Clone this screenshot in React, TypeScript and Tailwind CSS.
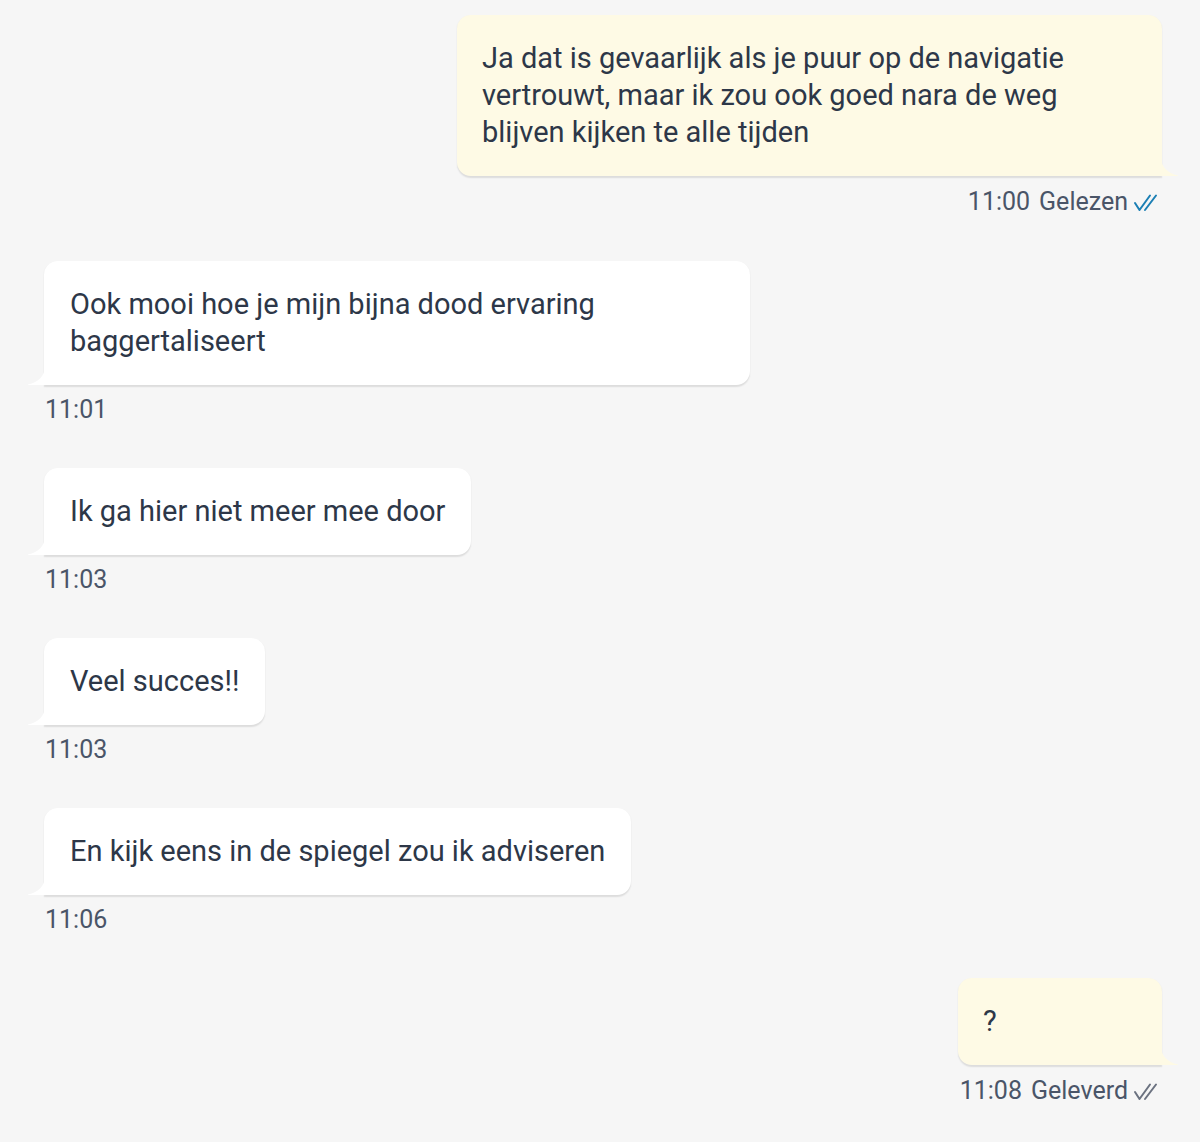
type Msg = {
  side: "in" | "out";
  text: string;
  time: string;
  status?: "Gelezen" | "Geleverd";
};

const messages: Msg[] = [
  {
    side: "out",
    text: "Ja dat is gevaarlijk als je puur op de navigatie vertrouwt, maar ik zou ook goed nara de weg blijven kijken te alle tijden",
    time: "11:00",
    status: "Gelezen",
  },
  { side: "in", text: "Ook mooi hoe je mijn bijna dood ervaring baggertaliseert", time: "11:01" },
  { side: "in", text: "Ik ga hier niet meer mee door", time: "11:03" },
  { side: "in", text: "Veel succes!!", time: "11:03" },
  { side: "in", text: "En kijk eens in de spiegel zou ik adviseren", time: "11:06" },
  { side: "out", text: "?", time: "11:08", status: "Geleverd" },
];

function Ticks({ read }: { read: boolean }) {
  return (
    <svg width="28" height="20" viewBox="0 0 28 20" className="ml-[4px] mt-[2px]">
      <path
        d="M3 10 L7.5 17 L18 2.5 M13 17 L24 2.5"
        fill="none"
        stroke={read ? "#1b7fb4" : "#6b7280"}
        strokeWidth="2"
        strokeLinecap="round"
        strokeLinejoin="round"
      />
    </svg>
  );
}

function Tail({ side, color }: { side: "in" | "out"; color: string }) {
  if (side === "out") {
    return (
      <svg width="17" height="17" viewBox="0 0 17 17" className="absolute bottom-0 right-[-16px]">
        <path d="M0 0 C1 8 6 14 17 16.5 L17 17 L0 17 Z" fill={color} />
      </svg>
    );
  }
  return (
    <svg width="17" height="17" viewBox="0 0 17 17" className="absolute bottom-0 left-[-16px]">
      <path d="M17 0 C16 8 11 14 0 16.5 L0 17 L17 17 Z" fill={color} />
    </svg>
  );
}

function Bubble({ m }: { m: Msg }) {
  const out = m.side === "out";
  const color = out ? "#fefae5" : "#ffffff";
  return (
    <div className={out ? "flex flex-col items-end" : "flex flex-col items-start"}>
      <div
        className={
          out
            ? "relative max-w-[705px] min-w-[204px] rounded-[14px] rounded-br-none bg-[#fefae5] px-[25px] pt-[25px] pb-[25px] text-[29px] leading-[37px] text-[#2d3748] shadow-[0_1.5px_1.5px_rgba(0,0,0,0.1)]"
            : "relative max-w-[706px] rounded-[14px] rounded-bl-none bg-white px-[26px] pt-[25px] pb-[25px] text-[29px] leading-[37px] text-[#2d3748] shadow-[0_1.5px_1.5px_rgba(0,0,0,0.1)]"
        }
      >
        {m.text}
        <Tail side={m.side} color={color} />
      </div>
      <div
        className={
          out
            ? "mt-[10px] mb-[1px] flex items-center pr-[2px] text-[25px] leading-[32px] text-[#4a5568]"
            : "mt-[9px] pl-[1px] text-[25px] leading-[32px] text-[#4a5568]"
        }
      >
        <span>{m.time}</span>
        {m.status && <span className="ml-[9px]">{m.status}</span>}
        {m.status && <Ticks read={m.status === "Gelezen"} />}
      </div>
    </div>
  );
}

export default function App() {
  return (
    <div className="min-h-[1142px] w-full bg-[#f6f6f6] font-['Roboto',sans-serif]">
      <div className="flex flex-col gap-[42px] pl-[44px] pr-[38px] pt-[15px]">
        {messages.map((m, i) => (
          <Bubble key={i} m={m} />
        ))}
      </div>
    </div>
  );
}
